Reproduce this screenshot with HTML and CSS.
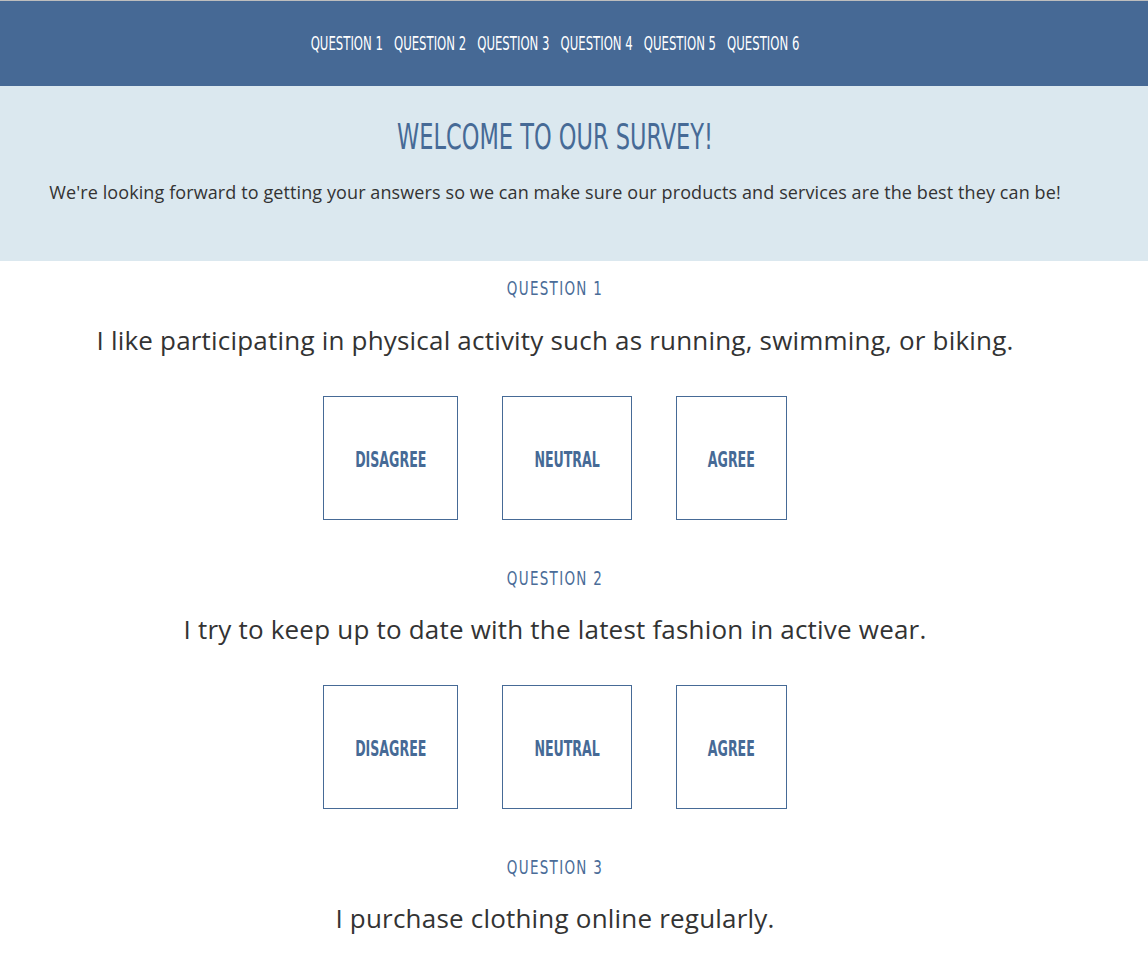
FILE: index.html
```html
<!DOCTYPE html>
<html lang="en">
<head>
<meta charset="utf-8">
<title>Survey</title>
<link rel="stylesheet" href="styles.css">
</head>
<body>
<nav class="topnav">
  <a href="#q1">QUESTION 1</a>
  <a href="#q2">QUESTION 2</a>
  <a href="#q3">QUESTION 3</a>
  <a href="#q4">QUESTION 4</a>
  <a href="#q5">QUESTION 5</a>
  <a href="#q6">QUESTION 6</a>
</nav>
<header class="hero">
  <h1 class="hero-title"><span class="tall">WELCOME TO OUR SURVEY!</span></h1>
  <p class="hero-text">We're looking forward to getting your answers so we can make sure our products and services are the best they can be!</p>
</header>
<main>
  <section class="question" id="q1">
    <h2 class="q-label"><span class="tall">QUESTION 1</span></h2>
    <p class="q-text">I like participating in physical activity such as running, swimming, or biking.</p>
    <div class="answers">
      <button class="answer"><span class="tall">DISAGREE</span></button>
      <button class="answer"><span class="tall">NEUTRAL</span></button>
      <button class="answer"><span class="tall">AGREE</span></button>
    </div>
  </section>
  <section class="question" id="q2">
    <h2 class="q-label"><span class="tall">QUESTION 2</span></h2>
    <p class="q-text">I try to keep up to date with the latest fashion in active wear.</p>
    <div class="answers">
      <button class="answer"><span class="tall">DISAGREE</span></button>
      <button class="answer"><span class="tall">NEUTRAL</span></button>
      <button class="answer"><span class="tall">AGREE</span></button>
    </div>
  </section>
  <section class="question" id="q3">
    <h2 class="q-label"><span class="tall">QUESTION 3</span></h2>
    <p class="q-text">I purchase clothing online regularly.</p>
    <div class="answers">
      <button class="answer"><span class="tall">DISAGREE</span></button>
      <button class="answer"><span class="tall">NEUTRAL</span></button>
      <button class="answer"><span class="tall">AGREE</span></button>
    </div>
  </section>
</main>
</body>
</html>
```
FILE: styles.css
```css
* { box-sizing: border-box; }

body {
  margin: 0;
  font-family: "Open Sans", "Noto Sans", sans-serif;
  color: #333333;
  background: #ffffff;
  border-top: 1px solid #bdbdbd;
}

/* condensed display face, stretched to mimic a tall narrow heading font */
.tall {
  display: inline-block;
  transform: scaleY(1.45);
}

.topnav {
  height: 85px;
  background: #466995;
  display: flex;
  justify-content: center;
  align-items: center;
  gap: 11px;
  padding-right: 38px;
}

.topnav a {
  display: inline-block;
  font-family: "DejaVu Sans Condensed", "DejaVu Sans", sans-serif;
  font-stretch: condensed;
  font-size: 13px;
  color: #ffffff;
  text-decoration: none;
  line-height: 20px;
  transform: scaleY(1.45);
}

.hero {
  background: #dbe8ef;
  height: 175px;
  padding: 33px 38px 0 0;
  text-align: center;
}

.hero-title {
  margin: 0;
  font-family: "DejaVu Sans Condensed", "DejaVu Sans", sans-serif;
  font-stretch: condensed;
  font-weight: 300;
  font-size: 25px;
  line-height: 36px;
  color: #466a96;
}

.hero-text {
  margin: 25px 0 0;
  font-size: 18px;
  letter-spacing: 0.1px;
  line-height: 24px;
  color: #333333;
}

.question {
  padding: 16px 38px 30px 0;
  text-align: center;
}

.q-label {
  margin: 0;
  font-family: "DejaVu Sans Condensed", "DejaVu Sans", sans-serif;
  font-stretch: condensed;
  font-weight: 400;
  font-size: 15px;
  letter-spacing: 1.3px;
  line-height: 24px;
  color: #4a6c98;
}

.q-label .tall {
  transform: scaleY(1.3);
}

.q-text {
  margin: 21px 0 0;
  font-size: 26px;
  letter-spacing: 0.2px;
  line-height: 36px;
  color: #333333;
}

.answers {
  margin-top: 38px;
  display: flex;
  justify-content: center;
  gap: 44px;
}

.answer {
  height: 124px;
  padding: 0 31px;
  background: #ffffff;
  border: 1px solid #466a96;
  font-family: "DejaVu Sans Condensed", "DejaVu Sans", sans-serif;
  font-stretch: condensed;
  font-weight: 700;
  font-size: 14px;
  line-height: 20px;
  color: #466a96;
  cursor: pointer;
}

.answer .tall {
  transform: translateY(1px) scaleY(1.5);
}
```
